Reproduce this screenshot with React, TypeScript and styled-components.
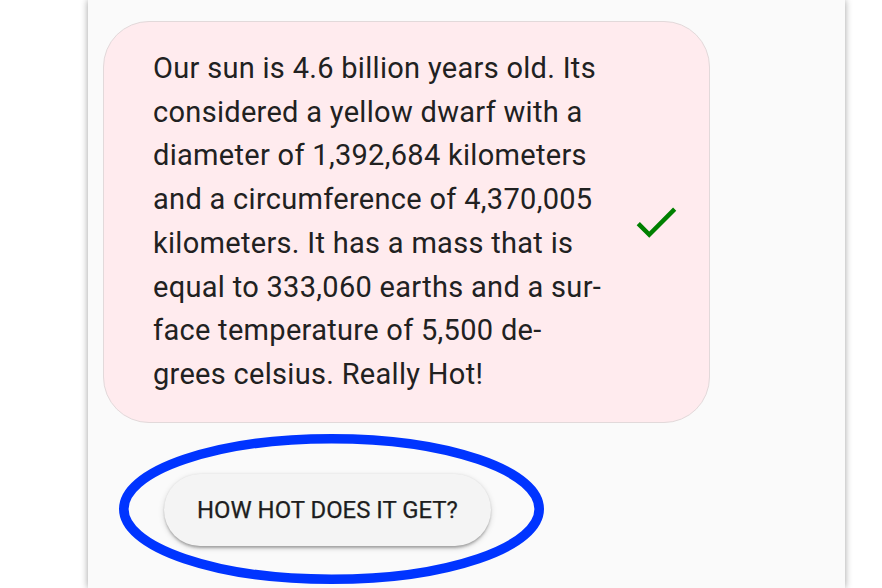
import React from "react";
import styled, { createGlobalStyle } from "styled-components";

const GlobalStyle = createGlobalStyle`
  html, body {
    margin: 0;
    padding: 0;
    background: #ffffff;
    font-family: Roboto, "Noto Sans", "Liberation Sans", sans-serif;
  }
  #root {
    min-height: 100vh;
  }
`;

const Page = styled.div`
  display: flex;
  height: 588px;
  overflow: hidden;
`;

const Panel = styled.main`
  box-sizing: border-box;
  margin-left: 88px;
  width: 757px;
  height: 588px;
  background: #fafafa;
  box-shadow: 0 0 7px rgba(0, 0, 0, 0.38);
  padding: 21px 0 0 15px;
  display: flex;
  flex-direction: column;
  align-items: flex-start;
`;

const Bubble = styled.section`
  box-sizing: border-box;
  width: 607px;
  display: flex;
  align-items: center;
  padding: 25px 26px 25px 49px;
  background: #ffebee;
  border: 1px solid #e2d9da;
  border-radius: 46px;
`;

const Message = styled.p`
  margin: 0;
  width: 460px;
  font-size: 29px;
  line-height: 43.7px;
  letter-spacing: 0.3px;
  color: #212121;
  white-space: nowrap;
`;

const CheckIcon = styled.svg`
  width: 54px;
  height: 54px;
  margin-left: auto;
  fill: #008000;
  flex: none;
`;

const SuggestionArea = styled.div`
  position: relative;
  margin: 51px 0 0 61px;
`;

const Chip = styled.button`
  box-sizing: border-box;
  height: 72px;
  padding: 0 33px;
  border: none;
  border-radius: 36px;
  background: #f4f4f4;
  color: #1e1e1e;
  font-family: Roboto, "Noto Sans", sans-serif;
  font-size: 23.9px;
  font-weight: 400;
  letter-spacing: 0;
  -webkit-text-stroke: 0.25px #1e1e1e;
  box-shadow: 0 3px 3px -1px rgba(0, 0, 0, 0.28), 0 2px 6px rgba(0, 0, 0, 0.14),
    0 0 2px rgba(0, 0, 0, 0.08);
  cursor: pointer;
`;

const Highlight = styled.svg`
  position: absolute;
  left: -45px;
  top: -40px;
  width: 425px;
  height: 150px;
  overflow: visible;
  pointer-events: none;
`;

const lines = [
  "Our sun is 4.6 billion years old. Its",
  "considered a yellow dwarf with a",
  "diameter of 1,392,684 kilometers",
  "and a circumference of 4,370,005",
  "kilometers. It has a mass that is",
  "equal to 333,060 earths and a sur-",
  "face temperature of 5,500 de-",
  "grees celsius. Really Hot!",
];

export default function App() {
  return (
    <>
      <GlobalStyle />
      <Page>
        <Panel>
          <Bubble>
            <Message>
              {lines.map((l, i) => (
                <React.Fragment key={i}>
                  {l}
                  {i < lines.length - 1 && <br />}
                </React.Fragment>
              ))}
            </Message>
            <CheckIcon viewBox="0 0 24 24" aria-label="sent">
              <path d="M9 16.17L4.83 12l-1.42 1.41L9 19 21 7l-1.41-1.41z" />
            </CheckIcon>
          </Bubble>
          <SuggestionArea>
            <Chip>HOW HOT DOES IT GET?</Chip>
            <Highlight viewBox="0 0 425 150">
              <ellipse
                cx="212.5"
                cy="75"
                rx="207.7"
                ry="70.3"
                fill="none"
                stroke="#0034ff"
                strokeWidth="9.6"
              />
            </Highlight>
          </SuggestionArea>
        </Panel>
      </Page>
    </>
  );
}
